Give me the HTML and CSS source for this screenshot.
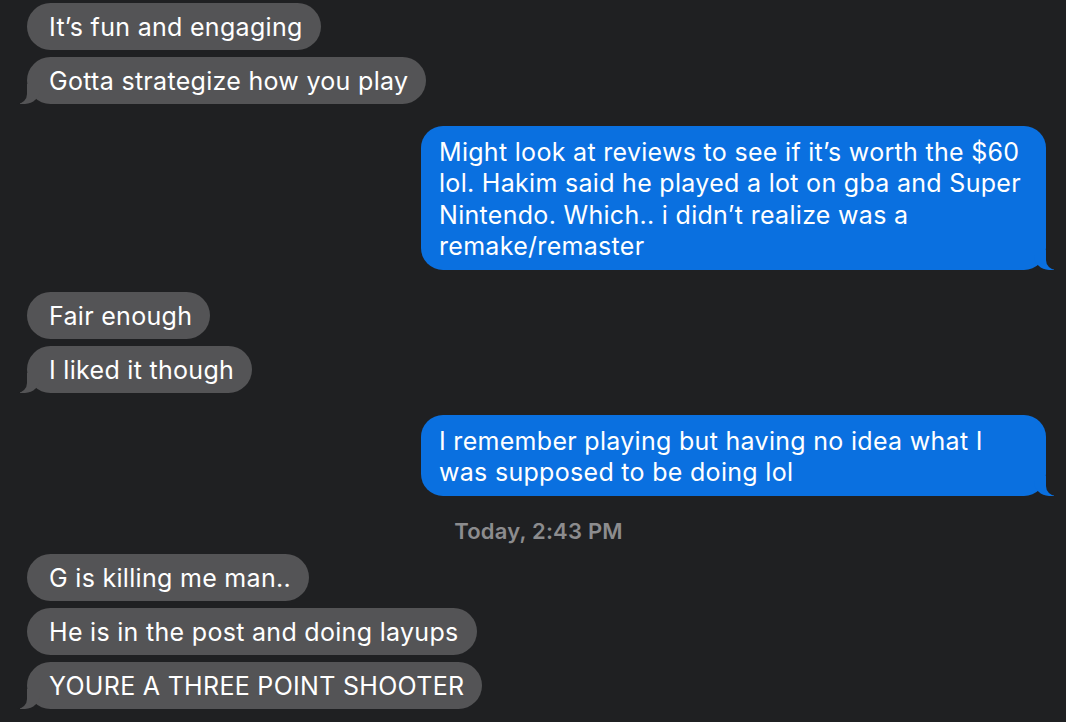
FILE: index.html
```html
<!DOCTYPE html>
<html>
<head>
<meta charset="utf-8">
<link rel="stylesheet" href="styles.css">
</head>
<body>
<div class="thread">
  <div class="group">
    <div class="bubble them">It’s fun and engaging</div>
    <div class="bubble them tail">Gotta strategize how you play</div>
  </div>
  <div class="group">
    <div class="bubble me tail">Might look at reviews to see if it’s worth the $60<br>lol. Hakim said he played a lot on gba and Super<br>Nintendo. Which.. i didn’t realize was a<br>remake/remaster</div>
  </div>
  <div class="group">
    <div class="bubble them">Fair enough</div>
    <div class="bubble them tail">I liked it though</div>
  </div>
  <div class="group">
    <div class="bubble me tail">I remember playing but having no idea what I<br>was supposed to be doing lol</div>
  </div>
  <div class="stamp">Today, 2:43 PM</div>
  <div class="group">
    <div class="bubble them">G is killing me man..</div>
    <div class="bubble them">He is in the post and doing layups</div>
    <div class="bubble them tail">YOURE A THREE POINT SHOOTER</div>
  </div>
</div>
</body>
</html>
```
FILE: styles.css
```css
html, body {
  margin: 0;
  padding: 0;
  background: #1f2022;
  height: 100%;
  overflow: hidden;
}
.thread {
  display: flex;
  flex-direction: column;
  padding: 3px 20px 0 27px;
  gap: 22px;
  font-family: Inter, "Noto Sans", sans-serif;
}
.group {
  display: flex;
  flex-direction: column;
  gap: 7px;
}
.bubble {
  position: relative;
  color: #ffffff;
  font-size: 25px;
  line-height: 31.5px;
  white-space: nowrap;
  letter-spacing: 0.3px;
}
.them {
  align-self: flex-start;
  background: #545456;
  border-radius: 24px;
  padding: 9px 18px 6.5px 22px;
}
.me {
  align-self: flex-end;
  background: #0a70e0;
  border-radius: 22px;
  width: 582px;
  padding: 10.5px 25px 7.5px 18px;
}
.them.tail::before {
  content: "";
  position: absolute;
  bottom: 0;
  left: -7px;
  width: 20px;
  height: 20px;
  background: #545456;
  border-bottom-right-radius: 15px;
}
.them.tail::after {
  content: "";
  position: absolute;
  bottom: 0;
  left: -26px;
  width: 26px;
  height: 20px;
  background: #1f2022;
  border-bottom-right-radius: 10px;
}
.me.tail::before {
  content: "";
  position: absolute;
  bottom: 0;
  right: -8px;
  width: 20px;
  height: 20px;
  background: #0a70e0;
  border-bottom-left-radius: 15px;
}
.me.tail::after {
  content: "";
  position: absolute;
  bottom: 0;
  right: -26px;
  width: 26px;
  height: 20px;
  background: #1f2022;
  border-bottom-left-radius: 10px;
}
.stamp {
  align-self: center;
  color: #8c8c8e;
  font-size: 22px;
  line-height: 26px;
  font-weight: 600;
  margin: 0 0 -12px;
  padding-left: 4px;
  letter-spacing: 0.2px;
}
```
